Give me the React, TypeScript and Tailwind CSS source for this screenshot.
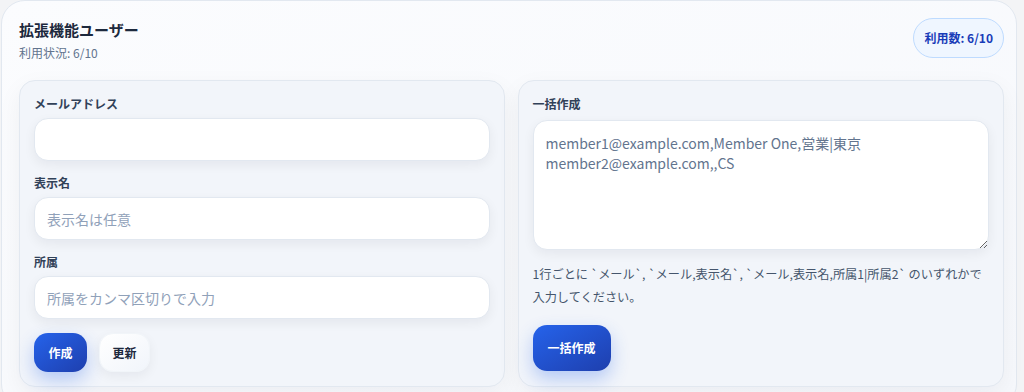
import { useState } from 'react';

const font = { fontFamily: '"Noto Sans CJK JP", "Noto Sans", sans-serif' };

function Field({ label, placeholder }: { label: string; placeholder?: string }) {
  return (
    <div className="flex flex-col gap-[6px]">
      <label className="text-[12px] leading-4 font-bold text-slate-700">{label}</label>
      <input
        placeholder={placeholder}
        className="h-[43px] w-full rounded-[14px] border border-slate-200 bg-white px-3 text-[14px] text-slate-700 placeholder:text-slate-400 shadow-[0_4px_12px_rgba(15,23,42,0.06)] outline-none"
      />
    </div>
  );
}

export default function App() {
  const [bulk, setBulk] = useState('');

  return (
    <div className="min-h-[392px] w-full overflow-hidden bg-[#f3f4f6]" style={font}>
      <div className="ml-[1px] w-[1016px] rounded-[24px] border border-slate-200 bg-gradient-to-br from-[#fbfcfe] to-[#f6f8fc] pb-[20px]">
        <div className="flex items-start justify-between pl-[17px] pr-[12px] pt-[17px]">
          <div>
            <h2 className="text-[15px] leading-6 font-bold text-slate-800">拡張機能ユーザー</h2>
            <p className="mt-[3px] text-[12px] leading-4 text-slate-500">利用状況: 6/10</p>
          </div>
          <span className="flex h-[40px] items-center rounded-full border border-blue-200 bg-blue-50 px-[10px] text-[12px] font-bold text-blue-800">
            利用数: 6/10
          </span>
        </div>

        <div className="mt-[19px] flex gap-[13px] pl-[17px] pr-[12px]">
          <div className="flex w-[486px] flex-col gap-[14px] rounded-[16px] border border-slate-200 bg-[#f2f5fa] px-[14px] pt-[15px] pb-[14px] shadow-[0_8px_24px_rgba(15,23,42,0.05)]">
            <Field label="メールアドレス" />
            <Field label="表示名" placeholder="表示名は任意" />
            <Field label="所属" placeholder="所属をカンマ区切りで入力" />
            <div className="flex gap-3">
              <button className="h-[39px] w-[53px] rounded-[14px] bg-gradient-to-br from-[#2563eb] to-[#1e3fae] text-[12px] font-bold text-white shadow-[0_8px_18px_rgba(37,99,235,0.3)]">
                作成
              </button>
              <button className="h-[39px] w-[51px] rounded-[14px] border border-slate-100 bg-gradient-to-br from-white to-[#f1f5fb] text-[12px] font-bold text-slate-800 shadow-[0_4px_12px_rgba(15,23,42,0.06)]">
                更新
              </button>
            </div>
          </div>

          <div className="flex w-[487px] flex-col rounded-[16px] border border-slate-200 bg-[#f2f5fa] px-[14px] pt-[15px] pb-[14px] shadow-[0_8px_24px_rgba(15,23,42,0.05)]">
            <label className="text-[12px] leading-4 font-bold text-slate-700">一括作成</label>
            <textarea
              value={bulk}
              onChange={(e) => setBulk(e.target.value)}
              placeholder={'member1@example.com,Member One,営業|東京\nmember2@example.com,,CS'}
              className="mt-[8px] h-[130px] w-full rounded-[14px] border border-slate-200 bg-white px-3 py-3 text-[14px] leading-5 text-slate-700 placeholder:text-slate-500 shadow-[0_4px_12px_rgba(15,23,42,0.06)] outline-none"
            />
            <p className="mt-[13px] text-[12.2px] leading-[23px] text-slate-600">
              1行ごとに `メール`, `メール,表示名`, `メール,表示名,所属1|所属2` のいずれかで入力してください。
            </p>
            <div className="mt-[16px]">
              <button className="h-[46px] w-[78px] rounded-[14px] bg-gradient-to-br from-[#2563eb] to-[#1e3fae] text-[12px] font-bold text-white shadow-[0_8px_18px_rgba(37,99,235,0.3)]">
                一括作成
              </button>
            </div>
          </div>
        </div>
      </div>
    </div>
  );
}
